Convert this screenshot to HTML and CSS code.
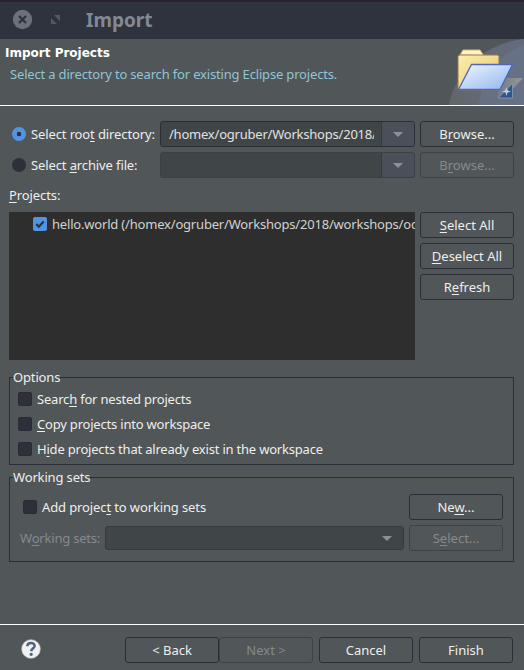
FILE: index.html
```html
<!DOCTYPE html>
<html lang="en">
<head>
<meta charset="utf-8">
<title>Import</title>
<link rel="stylesheet" href="styles.css">
</head>
<body>
<div class="window">
  <div class="titlebar">
    <svg class="controls" width="64" height="39" viewBox="0 0 64 39">
      <circle cx="22.5" cy="19.5" r="9.7" fill="#6c7079"/>
      <path d="M19 16l7 7M26 16l-7 7" stroke="#2f333e" stroke-width="2.3"/>
      <path d="M54 15h6v6zM51 18v6h6z" fill="#555961"/>
    </svg>
    <h1>Import</h1>
  </div>
  <header class="banner">
    <div class="banner-text">
      <h2>Import Projects</h2>
      <p>Select a directory to search for existing Eclipse projects.</p>
    </div>
    <svg class="art" width="76" height="66" viewBox="0 0 76 66">
      <defs>
        <linearGradient id="yellow" x1="0" y1="0" x2="1" y2="1"><stop offset="0" stop-color="#fbefb4"/><stop offset="1" stop-color="#e4c465"/></linearGradient>
        <linearGradient id="blue" x1="0" y1="0" x2="1" y2="1"><stop offset="0" stop-color="#f1f7fe"/><stop offset="1" stop-color="#8db5ef"/></linearGradient>
        <linearGradient id="haze" x1="0" y1="0" x2="1" y2="0"><stop offset="0" stop-color="#676c70"/><stop offset="1" stop-color="#687389"/></linearGradient>
        <linearGradient id="beam" x1="0" y1="0" x2="1" y2="0"><stop offset="0" stop-color="#777c82"/><stop offset="1" stop-color="#92969b"/></linearGradient>
      </defs>
      <path d="M1 66C5 39 32 4 76 0V66z" fill="url(#haze)" opacity=".75"/>
      <path d="M31 66C33 38 51 14 76 6V66z" fill="#69748c" opacity=".65"/>
      <path d="M50 45l8-6h17L65 50v-6l-15 15z" fill="url(#beam)"/>
      <path d="M50.500 59L64.500 44.500V59z" fill="#30548c" stroke="#8a9eb9" stroke-width=".8"/>
      <path d="M58.500 48l1 3.200 3.500 1.300-3.500 1-1 3.500-1-3.500-3.500-1 3.500-1.300z" fill="#bbd0e7"/>
      <path d="M12 16l3-5h17l4 6z" fill="#fff5c5" stroke="#d5b775"/>
      <path d="M10 51V17.500l1-1.500h39l1 1.500V51z" fill="url(#yellow)" stroke="#9c7448"/>
      <path d="M10.500 50.500L23.500 25.500h41L52 50.500z" fill="url(#blue)" stroke="#4c68bd" stroke-width="1.300"/>
    </svg>
  </header>
  <main>
    <section class="sources">
      <label class="radio-row"><span class="radio on"></span><span class="txt">Select roo<u>t</u> directory:</span></label>
      <div class="combo"><span class="value"><span class="path">/homex/ogruber/Workshops/2018/</span></span><span class="drop"><i></i></span></div>
      <button><span>B<u>r</u>owse...</span></button>
      <label class="radio-row"><span class="radio"></span><span class="txt">Select <u>a</u>rchive file:</span></label>
      <div class="combo off"><span class="value"></span><span class="drop"><i></i></span></div>
      <button class="off"><span>B<u>r</u>owse...</span></button>
    </section>
    <div class="caption"><u>P</u>rojects:</div>
    <section class="projects">
      <div class="list"><span class="check on"><svg width="14" height="14" viewBox="0 0 14 14"><path d="M3.300 7l2.500 2.700 4.900-5.200" fill="none" stroke="#2c303c" stroke-width="2.200"/></svg></span><span class="item">hello.world (/homex/ogruber/Workshops/2018/workshops/oc</span></div>
      <div class="actions"><button><span><u>S</u>elect All</span></button><button><span><u>D</u>eselect All</span></button><button><span>R<u>e</u>fresh</span></button></div>
    </section>
    <section class="group options">
      <h3>Options</h3>
      <label><span class="check"></span><span class="tight">Searc<u>h</u> for nested projects</span></label>
      <label><span class="check"></span><span class="tight"><u>C</u>opy projects into workspace</span></label>
      <label><span class="check"></span><span class="tight">H<u>i</u>de projects that already exist in the workspace</span></label>
    </section>
    <section class="group sets">
      <h3>Working sets</h3>
      <div class="set-row"><label><span class="check"></span><span class="txt">Add projec<u>t</u> to working sets</span></label><button><span>Ne<u>w</u>...</span></button></div>
      <div class="set-row second"><span class="set-label">W<u>o</u>rking sets:</span><div class="select"><i></i></div><button class="off"><span>S<u>e</u>lect...</span></button></div>
    </section>
  </main>
  <footer>
    <svg class="help" width="20" height="20" viewBox="0 0 20 20">
      <circle cx="10" cy="10" r="9.300" fill="#f0f1f3" stroke="#c3c7cf" stroke-width=".7"/>
      <path d="M6.300 7.200C6.500 2.900 13.700 3.200 13.600 7c-.1 2.400-3.400 2.500-3.400 5.200" fill="none" stroke="#52617f" stroke-width="2.500"/>
      <circle cx="10.200" cy="15.300" r="1.600" fill="#52617f"/>
    </svg>
    <button><span>&lt; Back</span></button><button class="off"><span>Next &gt;</span></button><button class="gap"><span>Cancel</span></button><button class="gap"><span>Finish</span></button>
  </footer>
</div>
</body>
</html>
```
FILE: styles.css
```css
* { box-sizing: border-box; }
body { margin: 0; background: #515658; color: #eeeeec; font: 13px/18px "Noto Sans", "Open Sans", sans-serif; }
h1, h2, h3, p { margin: 0; }
u { text-decoration: underline; text-decoration-thickness: 1px; text-underline-offset: 2px; text-decoration-skip-ink: none; }
.window { width: 524px; height: 670px; overflow: hidden; display: flex; flex-direction: column; }
.titlebar { height: 39px; flex: none; display: flex; align-items: center; background: #2f333e; border-top: 2px solid #29232f; }
.controls { margin-top: -2px; }
h1 { margin: -1px 0 0 22px; font-size: 19px; line-height: 24px; color: #828994; }
.banner { height: 67px; flex: none; display: flex; justify-content: space-between; border-bottom: 1px solid #fff; }
.banner-text { padding: 6px 0 0 5px; }
h2 { font: bold 12px/17px "DejaVu Sans", sans-serif; color: #fff; }
.banner p { margin: 3px 0 0 5px; color: #8fc5d4; white-space: nowrap; letter-spacing: -.17px; }
.art { flex: none; }
main { padding: 15px 10px 0 9px; flex: 1; }
.sources { display: grid; grid-template-columns: 146px 255px 94px; column-gap: 5px; row-gap: 5px; }
.radio-row { display: flex; align-items: center; padding-left: 3px; white-space: nowrap; }
.txt { letter-spacing: -.12px; }
.tight { letter-spacing: -.2px; }
.radio { width: 14px; height: 14px; flex: none; border-radius: 50%; background: #2d303b; margin-right: 5px; }
.radio.on { background: radial-gradient(circle, #2d303b 0 2px, #5294e2 2.600px); }
.combo { width: 255px; height: 26px; display: flex; border: 1px solid #2b2e39; border-radius: 3px; background: #404548; overflow: hidden; }
.combo.off { border-color: #3c4047; }
.value { flex: 1; min-width: 0; padding: 0 7px 0 8px; line-height: 24px; border-right: 1px solid #363b43; }
.path { display: block; color: #e0e1e0; white-space: nowrap; overflow: hidden; letter-spacing: -.22px; }
.drop { width: 32px; flex: none; display: flex; align-items: center; justify-content: center; background: #4b4f5a; }
i { display: block; border: 5px solid transparent; border-top-color: #8d9099; border-bottom: 0; }
button { width: 94px; height: 26px; flex: none; padding: 0; border: 1px solid #2b2e39; border-radius: 3px; background: transparent; color: inherit; font: inherit; white-space: nowrap; }
button.off { border-color: #3e4248; color: #868a8d; }
.caption { height: 34px; padding-top: 8px; letter-spacing: -.1px; }
.projects { display: flex; gap: 5px; }
.list { width: 406px; height: 148px; padding: 5px 0 0 24px; background: #2e2e2e; display: flex; overflow: hidden; }
.item { margin: -2px 0 0 5px; min-width: 0; height: 18px; overflow: hidden; white-space: nowrap; color: #d2d2d0; letter-spacing: -.19px; }
.check { width: 14px; height: 14px; flex: none; border-radius: 2px; background: #2d303b; border: 1px solid #292b36; }
.check.on { background: #5294e2; border: 0; }
.check svg { display: block; }
.actions { display: flex; flex-direction: column; gap: 5px; }
.group { width: 505px; border: 1px solid #2b2e39; }
.group h3 { width: fit-content; height: 18px; margin: -10px 0 0 3px; background: #515658; font-size: 13px; font-weight: normal; letter-spacing: -.15px; }
.options { height: 88px; margin-top: 17px; }
.group label { display: flex; align-items: center; height: 25px; padding-left: 8px; }
.group label .check { margin-right: 5px; }
.sets { height: 85px; margin-top: 12px; }
.set-row { display: flex; justify-content: space-between; padding: 0 10px 0 5px; }
.sets h3 + .set-row { margin-top: 8px; }
.second { margin-top: 5px; padding-left: 10px; justify-content: flex-start; align-items: center; color: #868a8d; }
.set-label { width: 85px; white-space: nowrap; letter-spacing: -.2px; }
.select { width: 299px; height: 24px; margin-right: 5px; border: 1px solid #363a3f; border-radius: 3px; background: #404548; display: flex; justify-content: flex-end; align-items: center; padding-right: 11px; }
footer { height: 46px; flex: none; border-top: 1px solid #fff; display: flex; padding: 12px 11px 0 21px; }
.help { margin: 2px 84px 0 0; flex: none; }
.gap { margin-left: 6px; }
```
